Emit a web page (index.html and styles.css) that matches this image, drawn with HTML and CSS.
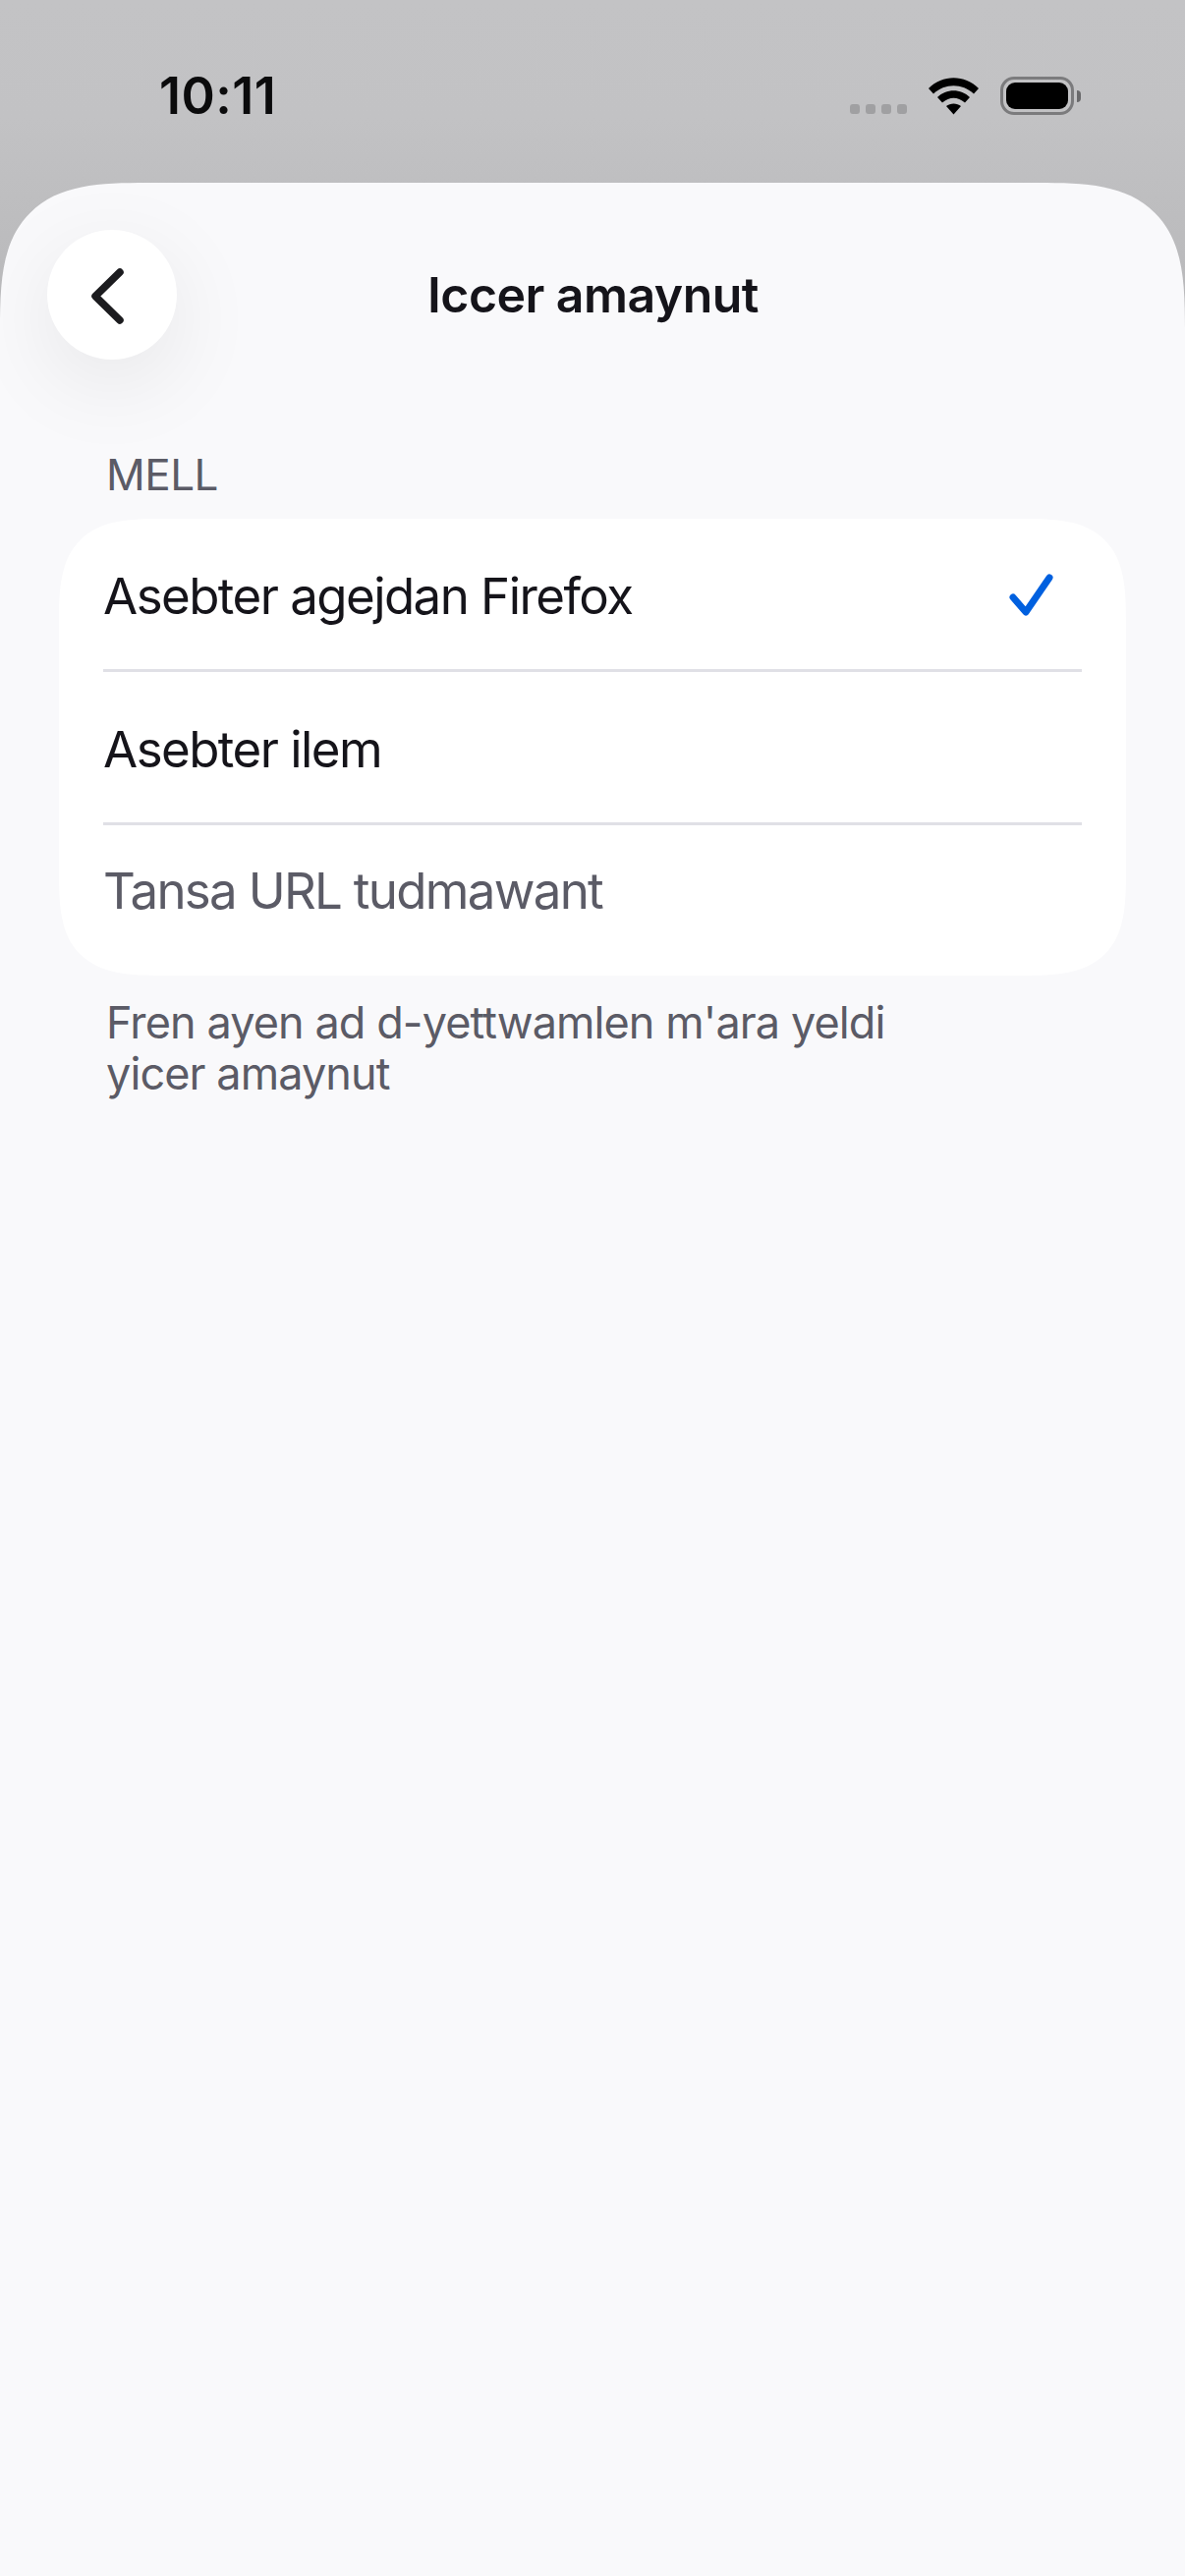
FILE: index.html
```html
<!DOCTYPE html>
<html lang="kab">
<head>
  <meta charset="UTF-8">
  <title>Iccer amaynut</title>
  <meta name="viewport" content="width=device-width, initial-scale=1.0">
  <link rel="stylesheet" href="styles.css">
</head>
<body>

  <div class="status-bar">
    <span class="ora">10:11</span>
    <div class="status-icone">
      <div class="segnale">
        <span></span><span></span><span></span><span></span>
      </div>
      <svg class="wifi" width="51" height="38" viewBox="0 0 51 38">
        <path d="M0 11 C14 -3.5 37 -3.5 51 11 L46 16.500 C34.500 5.500 16.500 5.500 5 16.500 Z" />
        <path d="M9 20 C18 11 33 11 42 20 L37 25.500 C29.500 19 21.500 19 14 25.500 Z" />
        <path d="M18 29 C22 25.500 29 25.500 33 29 L25.500 37.500 Z" />
      </svg>
      <div class="batteria">
        <div class="batteria-corpo"><div class="batteria-livello"></div></div>
        <div class="batteria-punta"></div>
      </div>
    </div>
  </div>

  <main class="foglio">
    <header class="barra">
      <button class="btn-indietro" aria-label="Back">
        <svg width="44" height="64" viewBox="0 0 44 64">
          <path d="M33 9 L8 33.500 L33 58" />
        </svg>
      </button>
      <h1>Iccer amaynut</h1>
    </header>

    <section class="sezione">
      <h2>MELL</h2>
      <ul class="scheda">
        <li class="riga">
          <span>Asebter agejdan Firefox</span>
          <svg class="spunta" width="48" height="46" viewBox="0 0 48 46">
            <path d="M5 25 L18 40 L42 5" />
          </svg>
        </li>
        <li class="riga">
          <span>Asebter ilem</span>
        </li>
        <li class="riga riga-campo">
          <span>Tansa URL tudmawant</span>
        </li>
      </ul>
      <p class="nota">Fren ayen ad d-yettwamlen m'ara yeldi<br>yicer amaynut</p>
    </section>
  </main>

</body>
</html>
```

FILE: styles.css
```css
* {
  box-sizing: border-box;
}

html, body {
  height: 100%;
}

body {
  margin: 0;
  display: flex;
  flex-direction: column;
  font-family: Inter, "Noto Sans", sans-serif;
  color: #15141a;
  background: linear-gradient(#c3c3c5 0, #c2c2c4 120px, #b9b9bb 300px);
}

/* barra di stato */
.status-bar {
  height: 186px;
  flex: none;
  display: flex;
  justify-content: space-between;
  padding: 72px 106px 0 162px;
}

.ora {
  font-size: 52px;
  line-height: 52px;
  font-weight: 600;
  letter-spacing: 0.5px;
  color: #0b0b0c;
}

.status-icone {
  display: flex;
  align-items: flex-start;
  padding-top: 6px;
}

.segnale {
  display: flex;
  gap: 6px;
  margin-top: 28px;
  margin-right: 22px;
}

.segnale span {
  width: 10px;
  height: 10px;
  border-radius: 3px;
  background-color: #a0a0a2;
}

.wifi {
  fill: #000;
  margin-top: 1px;
  margin-right: 22px;
}

.batteria {
  display: flex;
  align-items: center;
}

.batteria-corpo {
  width: 75px;
  height: 39px;
  padding: 3px;
  border: 3px solid #7b7b7d;
  border-radius: 14px;
}

.batteria-livello {
  height: 100%;
  border-radius: 9px;
  background-color: #000;
}

.batteria-punta {
  width: 4px;
  height: 12px;
  margin-left: 3px;
  border-radius: 0 6px 6px 0;
  background-color: #69696b;
}

/* foglio */
.foglio {
  flex: 1;
  overflow: hidden;
  background-color: #f9f9fb;
  border-radius: 150px 150px 0 0;
  corner-shape: superellipse(1.6);
}

.barra {
  display: grid;
  grid-template-columns: 1fr auto 1fr;
  align-items: center;
  padding: 48px 47px 0 48px;
}

.btn-indietro {
  width: 132px;
  height: 132px;
  padding: 0 6px 0 0;
  display: flex;
  align-items: center;
  justify-content: center;
  border: none;
  border-radius: 50%;
  background-color: #fff;
  box-shadow: 0 24px 90px rgba(0, 0, 0, 0.08);
}

.btn-indietro path {
  fill: none;
  stroke: #1c1c1f;
  stroke-width: 7.500;
  stroke-linecap: round;
  stroke-linejoin: round;
}

h1 {
  margin: 0;
  font-size: 50px;
  line-height: 60px;
  font-weight: 600;
  letter-spacing: -0.55px;
}

.sezione {
  padding: 0 60px;
}

h2 {
  margin: 0;
  padding: 0 0 0 48px;
  margin-top: 90px;
  font-size: 44px;
  line-height: 54px;
  font-weight: 400;
  letter-spacing: -0.5px;
  color: #5b5b66;
}

.scheda {
  list-style: none;
  margin: 18px 0 0;
  padding: 0 45px;
  background-color: #fff;
  border-radius: 106px;
  corner-shape: superellipse(1.6);
}

.riga {
  height: 156px;
  padding-top: 3px;
  display: flex;
  align-items: center;
  justify-content: space-between;
  border-bottom: 3px solid #e0e0e6;
  font-size: 51px;
  font-weight: 370;
  letter-spacing: -1.55px;
}

.riga-campo {
  height: 153px;
  padding: 0 0 20px;
  border-bottom: none;
  letter-spacing: -1.7px;
  color: #5b5b66;
}

.spunta {
  margin-right: 27px;
  fill: none;
  stroke: #0060df;
  stroke-width: 7;
  stroke-linecap: round;
  stroke-linejoin: round;
}

.nota {
  margin: 22px 0 0;
  padding-left: 48px;
  font-size: 45px;
  font-weight: 380;
  line-height: 52px;
  letter-spacing: -0.9px;
  color: #5b5b66;
}
```
